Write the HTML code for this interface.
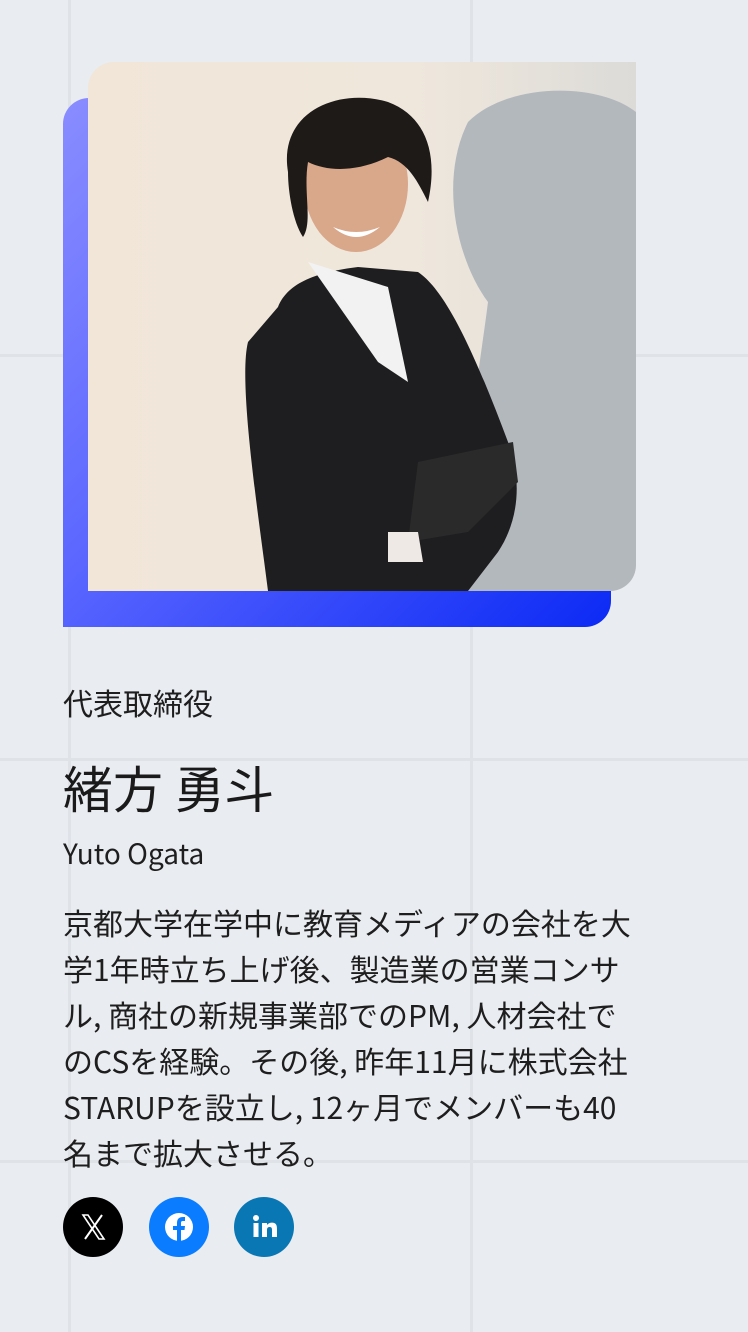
<!DOCTYPE html>
<html><head><meta charset="utf-8"><style>
html,body{margin:0;padding:0}
body{width:748px;height:1332px;position:relative;overflow:hidden;background:#e9ecf0;font-family:"Noto Sans CJK JP","Liberation Sans",sans-serif;color:#1e1e1e}
.gl{position:absolute;background:#dfe2e6}
.blue{position:absolute;left:63px;top:98px;width:548px;height:529px;border-radius:26px 0 26px 0;background:linear-gradient(135deg,#8a8dff 0%,#5a66ff 45%,#0c2af5 100%)}
.photo{position:absolute;left:88px;top:62px;width:548px;height:529px;border-radius:26px 0 26px 0;overflow:hidden}
.t{position:absolute;left:63px;white-space:nowrap}
.ic{position:absolute;top:1197px;width:60px;height:60px;border-radius:50%}
</style></head><body>
<div class="gl" style="left:68px;top:0;width:3px;height:1332px"></div>
<div class="gl" style="left:470px;top:0;width:3px;height:1332px"></div>
<div class="gl" style="left:0;top:354px;width:748px;height:3px"></div>
<div class="gl" style="left:0;top:758px;width:748px;height:3px"></div>
<div class="gl" style="left:0;top:1160px;width:748px;height:3px"></div>
<div class="blue"></div>
<div class="photo">
<svg width="548" height="529" viewBox="0 0 548 529">
<defs><linearGradient id="bg" x1="0" y1="0" x2="1" y2="0"><stop offset="0" stop-color="#f1e6d8"/><stop offset="0.6" stop-color="#efe7dc"/><stop offset="1" stop-color="#dcdbd8"/></linearGradient></defs>
<rect width="548" height="529" fill="url(#bg)"/>
<path d="M380 60 C420 20 510 20 548 50 L548 529 L380 529 C370 420 390 320 400 240 C370 200 350 120 380 60Z" fill="#b3b8bd"/>
<path d="M190 245 C200 220 230 210 270 205 L330 210 C360 230 390 300 420 380 C435 420 430 460 410 490 L380 529 L180 529 C170 450 150 320 160 280Z" fill="#1e1e20"/>
<path d="M220 200 L300 225 L320 320 L290 300Z" fill="#f2f2f2"/>
<path d="M330 400 L425 380 L430 420 L380 470 L320 480Z" fill="#2a2a2b"/>
<path d="M300 470 L330 470 L335 500 L300 500Z" fill="#efe9e6"/>
<ellipse cx="268" cy="122" rx="52" ry="68" fill="#d9a78a"/>
<path d="M200 110 C190 50 250 25 300 40 C340 55 350 95 340 140 C330 120 320 100 300 95 C270 110 240 110 220 100 C215 130 225 160 215 175 C205 160 200 130 200 110Z" fill="#1d1a18"/>
<path d="M245 165 Q268 185 292 165 Q268 175 245 165Z" fill="#fff"/>
<rect x="455" y="300" width="18" height="90" fill="#b3b8bd"/>
</svg>
</div>
<div class="t" style="top:682px;font-size:30px;line-height:40px">代表取締役</div>
<div class="t" style="top:757px;font-size:50px;line-height:60px;color:#1a1a1a">緒方 勇斗</div>
<div class="t" style="top:833px;font-size:28px;line-height:40px">Yuto Ogata</div>
<div class="t" style="top:899px;font-size:30px;line-height:46px">京都大学在学中に教育メディアの会社を大<br>学1年時立ち上げ後、製造業の営業コンサ<br>ル, 商社の新規事業部でのPM, 人材会社で<br>のCSを経験。その後, 昨年11月に株式会社<br>STARUPを設立し, 12ヶ月でメンバーも40<br>名まで拡大させる。</div>
<div class="ic" style="left:63px;background:#000">
<svg width="60" height="60" viewBox="0 0 60 60"><path d="M20 18 L36 42 L41 42 L25 18Z" fill="none" stroke="#fff" stroke-width="1.6"/><path d="M39 18 L22 42" stroke="#fff" stroke-width="2"/></svg></div>
<div class="ic" style="left:149px;background:#0a7cff">
<svg width="60" height="60" viewBox="0 0 60 60"><circle cx="30" cy="30" r="14" fill="#fff"/><path d="M28 46 L28 33 L24 33 L24 29 L28 29 L28 26 C28 22 30 20 34 20 L36 20 L36 24 L34 24 C32.5 24 32 24.5 32 26 L32 29 L36 29 L35.5 33 L32 33 L32 46Z" fill="#0a7cff"/></svg></div>
<div class="ic" style="left:234px;background:#0a77b5">
<svg width="60" height="60" viewBox="0 0 60 60"><circle cx="22" cy="21" r="3" fill="#fff"/><rect x="19.5" y="26" width="5" height="14" fill="#fff"/><path d="M28 26 L33 26 L33 28 C34 26.5 36 25.6 38 25.6 C42 25.6 43 28 43 32 L43 40 L38 40 L38 33 C38 31 37.5 30 35.5 30 C33.5 30 33 31.5 33 33 L33 40 L28 40Z" fill="#fff"/></svg></div>
</body></html>
